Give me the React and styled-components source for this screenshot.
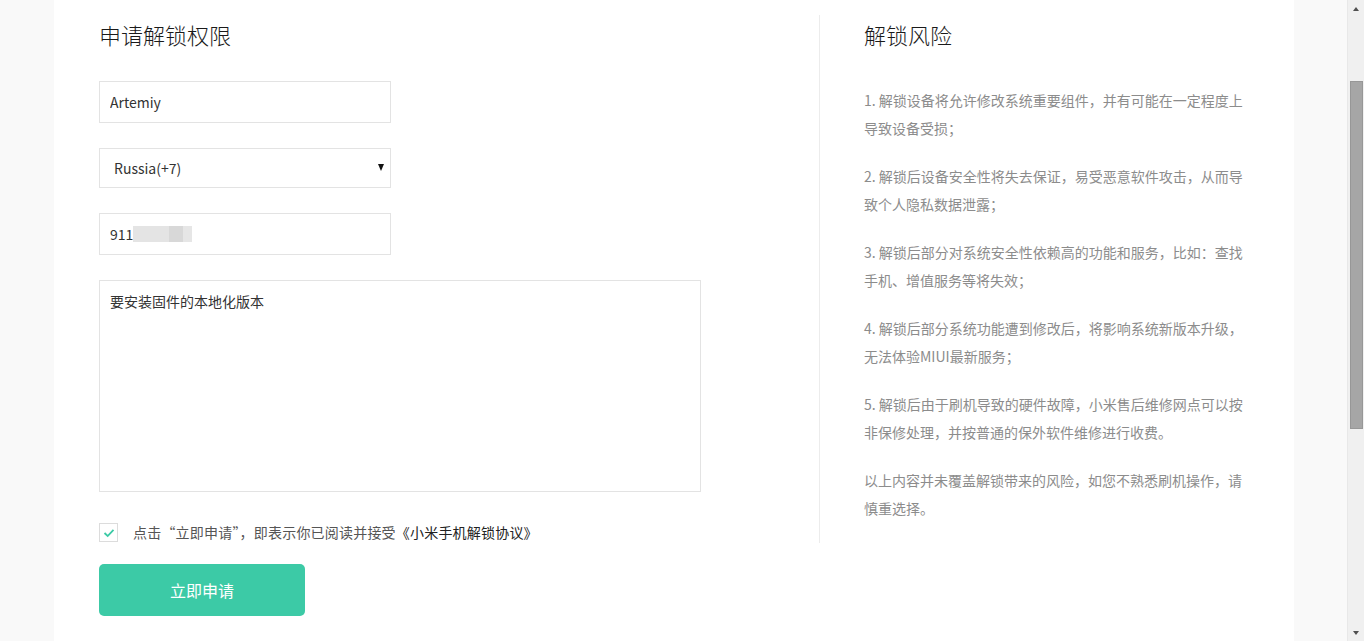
import styled, { createGlobalStyle } from 'styled-components';

const GlobalStyle = createGlobalStyle`
  html, body {
    margin: 0;
    padding: 0;
    height: 100%;
    overflow: hidden;
  }
  body {
    font-family: "Noto Sans CJK SC", "Noto Sans", sans-serif;
    color: #333;
  }
  * {
    box-sizing: border-box;
  }
`;

const Screen = styled.div`
  display: flex;
  width: 1364px;
  height: 641px;
`;

const Backdrop = styled.div`
  flex: 1;
  display: flex;
  background: #f9f9f9;
  padding: 0 53px 0 54px;
`;

const Card = styled.main`
  flex: 1;
  background: #fff;
  padding: 15px 44px 0 45px;
`;

const Row = styled.div`
  display: flex;
  align-items: stretch;
`;

const FormColumn = styled.section`
  flex: 1;
`;

const RiskColumn = styled.aside`
  flex: 0 0 431px;
  border-left: 1px solid #ececec;
  padding: 0 0 21px 44px;
`;

const Title = styled.h1`
  margin: 0;
  font-size: 22px;
  line-height: 38px;
  font-weight: 300;
  color: #1a1a1a;
`;

const Fields = styled.div`
  display: flex;
  flex-direction: column;
  gap: 25px;
  margin-top: 28px;
`;

const TextInput = styled.input`
  display: block;
  width: 292px;
  height: 42px;
  padding: 0 10px;
  border: 1px solid #e3e3e3;
  outline: none;
  font: inherit;
  font-size: 14px;
  color: #333;
  background: #fff;
`;

const SelectWrap = styled.div`
  position: relative;
  width: 292px;
`;

const Select = styled.select`
  display: block;
  width: 100%;
  height: 40px;
  padding: 0 0 0 14px;
  border: 1px solid #e3e3e3;
  border-radius: 0;
  outline: none;
  appearance: none;
  font: inherit;
  font-size: 14px;
  color: #333;
  background: #fff;
`;

const Caret = styled.span`
  position: absolute;
  right: 7px;
  top: 16px;
  width: 0;
  height: 0;
  border-left: 3.5px solid transparent;
  border-right: 3.5px solid transparent;
  border-top: 7px solid #111;
  pointer-events: none;
`;

const FieldBox = styled.div`
  display: flex;
  align-items: center;
  width: 292px;
  height: 42px;
  padding: 0 10px;
  border: 1px solid #e3e3e3;
  font-size: 14px;
  color: #333;
`;

const Blur = styled.span`
  display: inline-block;
  height: 16px;
  background: ${p => p.tone};
`;

const TextArea = styled.textarea`
  display: block;
  width: 602px;
  height: 212px;
  padding: 10px;
  border: 1px solid #e3e3e3;
  outline: none;
  resize: none;
  font: inherit;
  font-size: 14px;
  line-height: 20px;
  color: #333;
`;

const Agreement = styled.label`
  display: flex;
  align-items: center;
  gap: 15px;
  margin-top: 31px;
  font-size: 14px;
  color: #555;
  line-height: 19px;
  letter-spacing: 0.2px;
`;

const CheckBox = styled.span`
  display: flex;
  align-items: center;
  justify-content: center;
  width: 19px;
  height: 19px;
  border: 1px solid #dcdcdc;
  background: #fff;
`;

const Protocol = styled.span`
  color: #222;
`;

const SubmitButton = styled.button`
  display: block;
  width: 206px;
  height: 52px;
  margin-top: 21px;
  border: none;
  border-radius: 5px;
  background: #3ccaa6;
  color: #fff;
  font: inherit;
  font-size: 16px;
  cursor: pointer;
`;

const RiskList = styled.div`
  display: flex;
  flex-direction: column;
  gap: 20px;
  margin-top: 33px;
`;

const RiskText = styled.p`
  margin: 0;
  font-size: 14px;
  line-height: 28px;
  color: #8c8c8c;
  white-space: nowrap;
`;

const ScrollBar = styled.div`
  flex: 0 0 17px;
  display: flex;
  flex-direction: column;
  align-items: center;
  background: #f0f0f0;
  border-left: 1px solid #e8e8e8;
`;

const ArrowBtn = styled.span`
  flex: 0 0 17px;
  display: flex;
  align-items: center;
  justify-content: center;

  &::before {
    content: '';
    border-left: 3.5px solid transparent;
    border-right: 3.5px solid transparent;
    ${p => (p.down ? 'border-top: 4px solid #505050;' : 'border-bottom: 4px solid #505050;')}
  }
`;

const Track = styled.div`
  flex: 1;
  width: 100%;
  padding: 64px 1px 0 2px;
`;

const Thumb = styled.div`
  height: 348px;
  background: #a6a6a6;
  border: 1px solid #979797;
`;

const risks = [
  ['1. 解锁设备将允许修改系统重要组件，并有可能在一定程度上', '导致设备受损；'],
  ['2. 解锁后设备安全性将失去保证，易受恶意软件攻击，从而导', '致个人隐私数据泄露；'],
  ['3. 解锁后部分对系统安全性依赖高的功能和服务，比如：查找', '手机、增值服务等将失效；'],
  ['4. 解锁后部分系统功能遭到修改后，将影响系统新版本升级，', '无法体验MIUI最新服务；'],
  ['5. 解锁后由于刷机导致的硬件故障，小米售后维修网点可以按', '非保修处理，并按普通的保外软件维修进行收费。'],
  ['以上内容并未覆盖解锁带来的风险，如您不熟悉刷机操作，请', '慎重选择。'],
];

const App = () => (
  <Screen>
    <GlobalStyle />
    <Backdrop>
      <Card>
        <Row>
          <FormColumn>
            <Title>申请解锁权限</Title>
            <Fields>
              <TextInput defaultValue="Artemiy" />
              <SelectWrap>
                <Select defaultValue="ru">
                  <option value="ru">Russia(+7)</option>
                </Select>
                <Caret />
              </SelectWrap>
              <FieldBox>
                911
                <Blur tone="#e4e4e4" style={{ width: 36 }} />
                <Blur tone="#d8d8d8" style={{ width: 14 }} />
                <Blur tone="#e6e6e6" style={{ width: 9 }} />
              </FieldBox>
              <TextArea defaultValue="要安装固件的本地化版本" />
            </Fields>
            <Agreement>
              <CheckBox>
                <svg width="12" height="10" viewBox="0 0 12 10">
                  <path d="M1.5 5 L4.7 8 L10.5 1.8" fill="none" stroke="#3ccaa6" strokeWidth="1.8" />
                </svg>
              </CheckBox>
              <span>
                点击“立即申请”，即表示你已阅读并接受<Protocol>《小米手机解锁协议》</Protocol>
              </span>
            </Agreement>
          </FormColumn>
          <RiskColumn>
            <Title>解锁风险</Title>
            <RiskList>
              {risks.map(([a, b]) => (
                <RiskText key={a}>
                  {a}
                  <br />
                  {b}
                </RiskText>
              ))}
            </RiskList>
          </RiskColumn>
        </Row>
        <SubmitButton>立即申请</SubmitButton>
      </Card>
    </Backdrop>
    <ScrollBar>
      <ArrowBtn />
      <Track>
        <Thumb />
      </Track>
      <ArrowBtn down />
    </ScrollBar>
  </Screen>
);

export default App;
